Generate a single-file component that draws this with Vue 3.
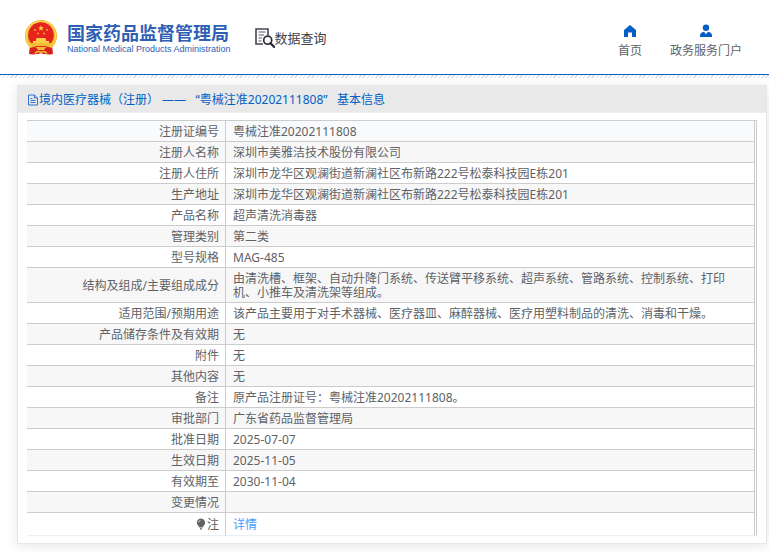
<script setup>
const rows = [
  ['注册证编号', '粤械注准20202111808'],
  ['注册人名称', '深圳市美雅洁技术股份有限公司'],
  ['注册人住所', '深圳市龙华区观澜街道新澜社区布新路222号松泰科技园E栋201'],
  ['生产地址', '深圳市龙华区观澜街道新澜社区布新路222号松泰科技园E栋201'],
  ['产品名称', '超声清洗消毒器'],
  ['管理类别', '第二类'],
  ['型号规格', 'MAG-485'],
  ['结构及组成/主要组成成分', '由清洗槽、框架、自动升降门系统、传送臂平移系统、超声系统、管路系统、控制系统、打印机、小推车及清洗架等组成。'],
  ['适用范围/预期用途', '该产品主要用于对手术器械、医疗器皿、麻醉器械、医疗用塑料制品的清洗、消毒和干燥。'],
  ['产品储存条件及有效期', '无'],
  ['附件', '无'],
  ['其他内容', '无'],
  ['备注', '原产品注册证号：粤械注准20202111808。'],
  ['审批部门', '广东省药品监督管理局'],
  ['批准日期', '2025-07-07'],
  ['生效日期', '2025-11-05'],
  ['有效期至', '2030-11-04'],
  ['变更情况', ''],
]
</script>

<template>
  <header class="top">
    <a class="brand" href="#">
      <svg class="emblem" viewBox="0 0 32 35" aria-hidden="true">
        <path d="M5 25 L4 34 Q10 35 16 33 Q22 35 28 34 L27 25 Z" fill="#d9201c" />
        <circle cx="16" cy="16" r="16" fill="#efb526" />
        <circle cx="16" cy="16" r="14.5" fill="none" stroke="#f9d75a" stroke-width="1.4" />
        <circle cx="16" cy="15" r="12.8" fill="#e6231d" />
        <path d="M16 5.2 L16.8 7.2 L18.9 7.3 L17.3 8.6 L17.8 10.7 L16 9.5 L14.2 10.7 L14.7 8.6 L13.1 7.3 L15.2 7.2 Z" fill="#f9d040" />
        <g fill="#f0a92c">
          <circle cx="10" cy="10" r="1" /><circle cx="22" cy="10" r="1" />
          <circle cx="13" cy="13.5" r="1" /><circle cx="19" cy="13.5" r="1" />
        </g>
        <path d="M11 19 L12 18 H20 L21 19 V21 H24 V23 H8 V21 H11 Z" fill="#f8cf48" />
        <path d="M4 23 H28 L26 26 H6 Z" fill="#f3bd32" />
        <path d="M5 28 Q11 25.5 16 29 Q21 25.5 27 28 L27 34 Q21 35 16 33 Q11 35 5 34 Z" fill="#d9201c" />
        <path d="M11 27 H21 L19 30 H13 Z" fill="#f4bd34" />
        <path d="M10 33.5 Q13 30 16 32.5 Q19 30 22 33.5" fill="none" stroke="#f3bd32" stroke-width="1.5" />
      </svg>
      <span class="names">
        <span class="cn">国家药品监督管理局</span>
        <span class="en">National Medical Products Administration</span>
      </span>
    </a>
    <a class="query" href="#">
      <svg class="query-icon" viewBox="0 0 20 20" aria-hidden="true">
        <path d="M13 7 V1 H1 V16 H8" fill="none" stroke="#45454f" stroke-width="1.6" />
        <path d="M3.5 4 H10.5 M3.5 7 H9 M3.5 10 H7 M3.5 13 H6.5" stroke="#5b5b66" stroke-width="1.2" />
        <circle cx="12.7" cy="12.2" r="4" fill="#fff" stroke="#2c2b3a" stroke-width="1.7" />
        <path d="M15.6 15.2 L19 18.8" stroke="#2c2b3a" stroke-width="2.4" stroke-linecap="round" />
      </svg>
      <span>数据查询</span>
    </a>
    <nav class="nav">
      <a href="#">
        <svg viewBox="0 0 14 14" aria-hidden="true"><path d="M7 1 L13 6 V13 H9 V8.5 H5 V13 H1 V6 Z" fill="#0260c4" /></svg>
        <span>首页</span>
      </a>
      <a href="#">
        <svg viewBox="0 0 14 14" aria-hidden="true">
          <circle cx="7" cy="3.8" r="3.2" fill="#0260c4" />
          <path d="M1 13 V11.5 Q1.2 8.3 5 7.8 L7 10.2 L9 7.8 Q12.8 8.3 13 11.5 V13 Z" fill="#0260c4" />
        </svg>
        <span>政务服务门户</span>
      </a>
    </nav>
  </header>
  <div class="hatch"></div>

  <main class="card">
    <h1 class="title">
      <svg class="doc" viewBox="0 0 12 12" aria-hidden="true">
        <path d="M1.5 1 H7.5 L10.5 4 V11 H1.5 Z M7.5 1 V4 H10.5 M3.5 4.5 H5.5 M3.5 6.5 H8.5 M3.5 8.5 H8.5" fill="none" stroke="#2f74c9" />
      </svg>
      <span>境内医疗器械（注册） ——&nbsp;&nbsp; “粤械注准20202111808”&nbsp;&nbsp; 基本信息</span>
    </h1>
    <div class="body">
      <table class="info">
        <tbody>
          <tr v-for="[label, value] in rows" :key="label">
            <th scope="row">{{ label }}</th>
            <td>{{ value }}</td>
          </tr>
          <tr class="note">
            <th scope="row">
              <svg class="bulb" viewBox="0 0 10 12" aria-hidden="true">
                <path d="M5 0.5 A4.2 4.2 0 0 1 7.5 8 L6.5 9.5 H3.5 L2.5 8 A4.2 4.2 0 0 1 5 0.5 Z M4 10.2 H6 V11.5 H4 Z" fill="#606266" />
                <path d="M2.4 4.4 Q2.8 2.6 4.6 2.3" fill="none" stroke="#fff" stroke-width="0.7" />
              </svg>注
            </th>
            <td><a class="detail" href="#">详情</a></td>
          </tr>
        </tbody>
      </table>
    </div>
  </main>
</template>

<style>
body {
  margin: 0;
  background: #fff;
  font-family: "Noto Sans", "Noto Sans CJK SC", sans-serif;
  font-size: 12px;
  color: #606266;
}
</style>

<style scoped>
a {
  color: inherit;
  text-decoration: none;
}
.top {
  display: flex;
  align-items: center;
  height: 74px;
  padding: 0 27px 0 25px;
  border-bottom: 1px solid #0260c4;
}
.brand {
  display: flex;
  align-items: center;
  gap: 10px;
}
.emblem {
  width: 32px;
  height: 35px;
}
.names {
  display: flex;
  flex-direction: column;
  padding-top: 2px;
  color: #2f5fb3;
  white-space: nowrap;
}
.cn {
  font-family: "Noto Sans CJK SC", sans-serif;
  font-size: 18px;
  font-weight: 700;
  line-height: 22px;
}
.en {
  font-family: "Liberation Sans", sans-serif;
  font-size: 9px;
  line-height: 12px;
}
.query {
  display: flex;
  align-items: center;
  margin-left: 24px;
  padding-top: 2px;
  color: #3f3f46;
  font-size: 13px;
  line-height: 20px;
  white-space: nowrap;
}
.query-icon {
  width: 20px;
  height: 20px;
}
.nav {
  display: flex;
  gap: 28px;
  margin-left: auto;
  padding-top: 10px;
}
.nav a {
  display: flex;
  flex-direction: column;
  align-items: center;
  gap: 4px;
  line-height: 18px;
  white-space: nowrap;
}
.nav svg {
  width: 14px;
  height: 14px;
}
.hatch {
  height: 3px;
  background: repeating-linear-gradient(135deg, #dcdcdc 0 1px, #fff 1px 3px);
}
.card {
  margin: 7px 2px 10px 17px;
  border: 1px solid #e6e8ec;
  border-top: 0;
  box-shadow: 0 2px 12px rgba(0, 0, 0, 0.1);
}
.title {
  display: flex;
  align-items: center;
  height: 25px;
  margin: 0;
  padding: 2px 9px 0;
  border-bottom: 1px solid #ebeef5;
  background: #e9e9e9;
  color: #0260c4;
  font-size: 12px;
  font-weight: 400;
  line-height: 18px;
  white-space: nowrap;
}
.doc {
  width: 12px;
  height: 12px;
}
.body {
  padding: 7px 9px;
}
.info {
  width: 100%;
  border-collapse: separate;
  border-spacing: 0;
  border-top: 1px solid #ccc;
  border-right: 1px solid #ccc;
  padding-right: 1px;
}
.info th,
.info td {
  height: 14px;
  padding: 4px 6px 2px;
  border-right: 1px solid #ccc;
  border-bottom: 1px solid #ccc;
  font-weight: 400;
  line-height: 14px;
}
.info th {
  width: 186px;
  text-align: right;
}
.info td {
  padding-right: 14px;
  padding-left: 7px;
  text-align: left;
}
.info tr:nth-child(even) > * {
  background: #f7f7f7;
}
.info tr:first-child > * {
  background: #f9fafc;
}
.info .note > * {
  height: 16px;
  border-bottom-color: #ebeef5;
}
.bulb {
  width: 10px;
  height: 12px;
  margin-right: 1px;
  vertical-align: -1px;
}
.detail {
  color: #409eff;
}
</style>
